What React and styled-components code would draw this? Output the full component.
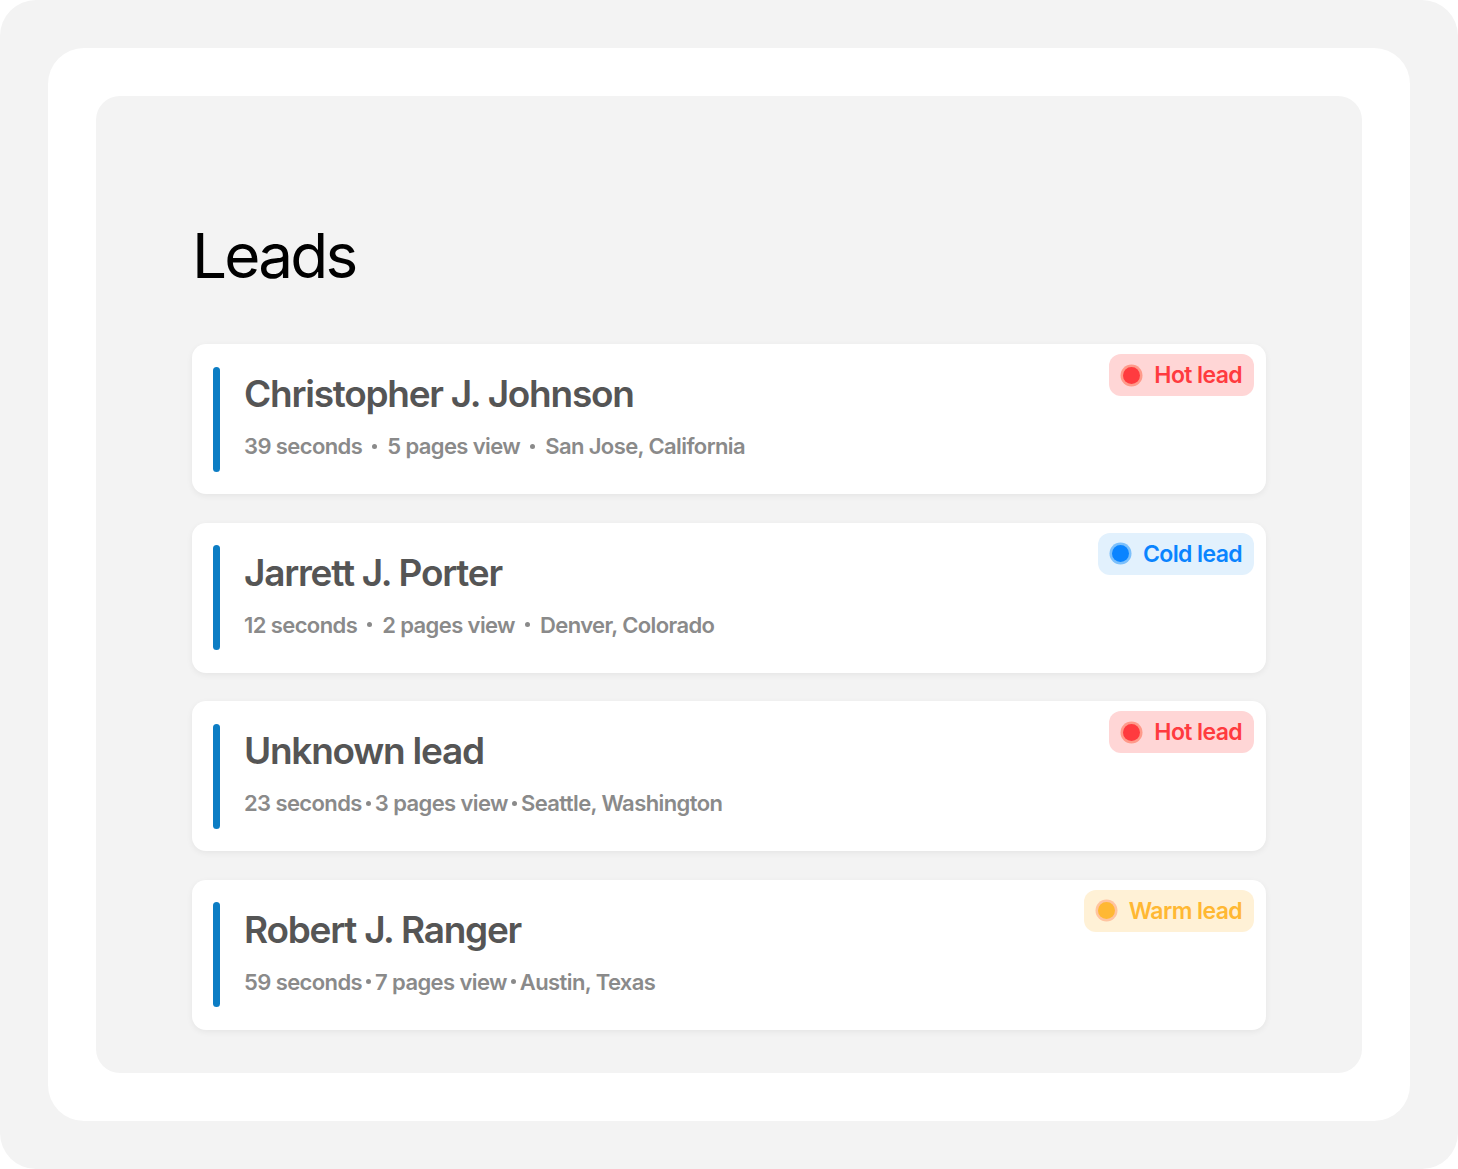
import React from 'react';
import styled, { createGlobalStyle } from 'styled-components';

const GlobalStyle = createGlobalStyle`
	html, body {
		margin: 0;
		padding: 0;
		background: #ffffff;
	}
	body {
		font-family: Inter, "Noto Sans", sans-serif;
	}
`;

const leads = [
	{ name: 'Christopher J. Johnson', meta: ['39 seconds', '5 pages view', 'San Jose, California'], kind: 'hot', gap: 10 },
	{ name: 'Jarrett J. Porter', meta: ['12 seconds', '2 pages view', 'Denver, Colorado'], kind: 'cold', gap: 10 },
	{ name: 'Unknown lead', meta: ['23 seconds', '3 pages view', 'Seattle, Washington'], kind: 'hot', gap: 4 },
	{ name: 'Robert J. Ranger', meta: ['59 seconds', '7 pages view', 'Austin, Texas'], kind: 'warm', gap: 4 },
];

const tones = {
	hot: { label: 'Hot lead', bg: '#ffd6d6', fg: '#ff3b3f', halo: '#ff9a8a' },
	cold: { label: 'Cold lead', bg: '#e2f1fd', fg: '#0a84ff', halo: '#7cc0fb' },
	warm: { label: 'Warm lead', bg: '#fff1d6', fg: '#ffb833', halo: '#ffc4a0' },
};

const Frame = styled.div`
	width: 1458px;
	height: 1169px;
	box-sizing: border-box;
	background: #f3f3f3;
	border-radius: 36px;
	padding: 48px;
`;

const Sheet = styled.div`
	height: 100%;
	box-sizing: border-box;
	background: #ffffff;
	border-radius: 36px;
	padding: 48px;
`;

const Panel = styled.section`
	height: 100%;
	box-sizing: border-box;
	background: #f3f3f3;
	border-radius: 24px;
	padding: 124px 96px 0;
`;

const Title = styled.h1`
	margin: 0 0 52px 0;
	font-size: 62px;
	line-height: 72px;
	font-weight: 400;
	letter-spacing: -2.8px;
	color: #000;
`;

const List = styled.div`
	display: flex;
	flex-direction: column;
	gap: 28.5px;
`;

const Card = styled.div`
	position: relative;
	height: 150px;
	box-sizing: border-box;
	background: #fff;
	border-radius: 14px;
	box-shadow: 0 2px 6px rgba(0, 0, 0, 0.06);
	display: flex;
	align-items: center;
	padding: 0 22px 0 21px;
`;

const Bar = styled.div`
	width: 7px;
	height: 105px;
	border-radius: 4px;
	background: #0c7dc4;
	flex-shrink: 0;
`;

const Body = styled.div`
	margin-left: 24px;
	display: flex;
	flex-direction: column;
	gap: 14px;
	padding-bottom: 6px;
`;

const Name = styled.div`
	font-size: 37px;
	line-height: 46px;
	font-weight: 600;
	letter-spacing: -1.25px;
	color: #555555;
`;

const Meta = styled.div`
	display: flex;
	align-items: center;
	gap: ${(p) => p.$gap}px;
	font-size: 22px;
	line-height: 30px;
	font-weight: 600;
	letter-spacing: -0.6px;
	color: #8a8a8a;
`;

const Dot = styled.span`
	width: 5px;
	height: 5px;
	border-radius: 50%;
	background: #8a8a8a;
`;

const Badge = styled.div`
	position: absolute;
	top: 10px;
	right: 12px;
	height: 42px;
	box-sizing: border-box;
	padding: 0 12px 0 14px;
	border-radius: 12px;
	display: flex;
	align-items: center;
	gap: 14px;
	background: ${(p) => p.$tone.bg};
	color: ${(p) => p.$tone.fg};
	font-size: 23px;
	font-weight: 600;
	letter-spacing: -0.6px;
`;

const BadgeDot = styled.span`
	width: 17px;
	height: 17px;
	border-radius: 50%;
	background: ${(p) => p.$tone.fg};
	box-shadow: 0 0 0 2.5px ${(p) => p.$tone.halo};
`;

const LeadCard = ({ lead }) => {
	const tone = tones[lead.kind];
	return (
		<Card>
			<Bar />
			<Body>
				<Name>{lead.name}</Name>
				<Meta $gap={lead.gap}>
					{lead.meta.map((m, i) => (
						<React.Fragment key={m}>
							{i > 0 && <Dot />}
							<span>{m}</span>
						</React.Fragment>
					))}
				</Meta>
			</Body>
			<Badge $tone={tone}>
				<BadgeDot $tone={tone} />
				{tone.label}
			</Badge>
		</Card>
	);
};

export default function App() {
	return (
		<>
			<GlobalStyle />
			<Frame>
				<Sheet>
					<Panel>
						<Title>Leads</Title>
						<List>
							{leads.map((l) => (
								<LeadCard key={l.name} lead={l} />
							))}
						</List>
					</Panel>
				</Sheet>
			</Frame>
		</>
	);
}
